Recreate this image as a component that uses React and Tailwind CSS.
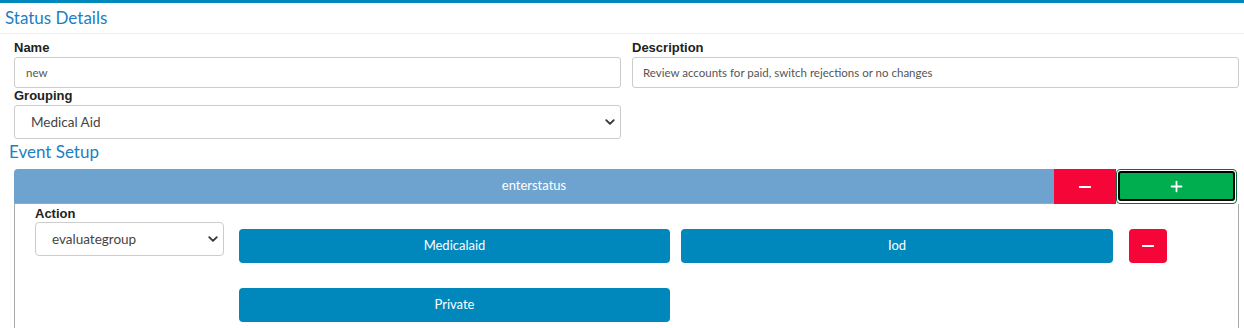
import { Minus, Plus } from "lucide-react";

const sans = { fontFamily: "Lato, 'Liberation Sans', sans-serif" };

function Chevron() {
  return (
    <svg width="10" height="10" viewBox="0 0 16 16" className="absolute right-[5px] top-1/2 -translate-y-1/2 pointer-events-none">
      <path d="M2 5l6 6 6-6" fill="none" stroke="#343a40" strokeWidth="3" strokeLinecap="round" strokeLinejoin="round" />
    </svg>
  );
}

function Label({ children, className = "" }) {
  return (
    <div className={`text-[13px] font-bold text-[#222] leading-[14px] ${className}`} style={{ fontFamily: "'Liberation Sans', Arial, sans-serif" }}>
      {children}
    </div>
  );
}

function BlueBtn({ children }) {
  return (
    <div className="h-[34px] flex items-center justify-center bg-[#0088bd] rounded-[4px] text-white text-[13px]">{children}</div>
  );
}

export default function App() {
  return (
    <div className="w-[1244px] h-[328px] overflow-hidden bg-white" style={sans}>
      <div className="h-[3px] bg-[#0088bd]" />
      <div className="h-[31px] border-b border-[#eeeeee] pl-[5px] pt-[3px] text-[17px] text-[#1c80c4] leading-6">Status Details</div>

      <div className="grid grid-cols-2 gap-x-[11px] pl-[14px] pr-[5px] pt-[7px]">
        <div>
          <Label>Name</Label>
          <div className="mt-[2px] h-[31px] border border-[#cccccc] rounded-[3px] flex items-center pl-[11px] text-[11.5px] text-[#555]">new</div>
        </div>
        <div>
          <Label>Description</Label>
          <div className="mt-[2px] h-[31px] border border-[#cccccc] rounded-[3px] flex items-center pl-[10px] text-[11.5px] text-[#555]">
            Review accounts for paid, switch rejections or no changes
          </div>
        </div>
        <div className="pt-[1px]">
          <Label>Grouping</Label>
          <div className="relative mt-[2px] h-[34px] border border-[#cccccc] rounded-[3px] flex items-center pl-[16px] text-[13.5px] text-[#444]">
            Medical Aid
            <Chevron />
          </div>
        </div>
      </div>

      <div className="pl-[9px] pt-[1px] text-[17px] text-[#1c80c4] leading-6">Event Setup</div>

      <div className="pl-[14px] pr-[5px] pt-[5px]">
        <div className="flex h-[35px]">
          <div className="w-[1040px] bg-[#6fa3cf] rounded-tl-[4px] flex items-center justify-center text-white text-[13px] border-b border-[#9aa6b0]">
            enterstatus
          </div>
          <div className="w-[62px] bg-[#f60538] flex items-center justify-center text-white">
            <Minus size={18} strokeWidth={2.5} />
          </div>
          <div className="w-[121px] p-[1px] pb-[2px] border border-[#0d6b3b] rounded-[4px] bg-white">
            <div className="h-full border-2 border-black rounded-[3px] bg-[#00ad4f] flex items-center justify-center text-white">
              <Plus size={17} strokeWidth={2.5} />
            </div>
          </div>
        </div>

        <div className="w-[1225px] h-[130px] border-x border-[#aaaaaa] flex pl-[20px]">
          <div className="w-[189px] pt-[3px]">
            <Label>Action</Label>
            <div className="relative mt-[1px] h-[34px] border border-[#cccccc] rounded-[4px] flex items-center pl-[16px] text-[13.5px] text-[#444]">
              evaluategroup
              <Chevron />
            </div>
          </div>
          <div className="ml-[15px] pt-[25px] flex flex-col gap-[25px]">
            <div className="flex gap-[11px] items-center">
              <div className="w-[431px]"><BlueBtn>Medicalaid</BlueBtn></div>
              <div className="w-[432px]"><BlueBtn>Iod</BlueBtn></div>
              <div className="ml-[5px] w-[38px] h-[34px] bg-[#f60538] rounded-[4px] flex items-center justify-center text-white">
                <Minus size={18} strokeWidth={2.5} />
              </div>
            </div>
            <div className="w-[431px]"><BlueBtn>Private</BlueBtn></div>
          </div>
        </div>
      </div>
    </div>
  );
}
